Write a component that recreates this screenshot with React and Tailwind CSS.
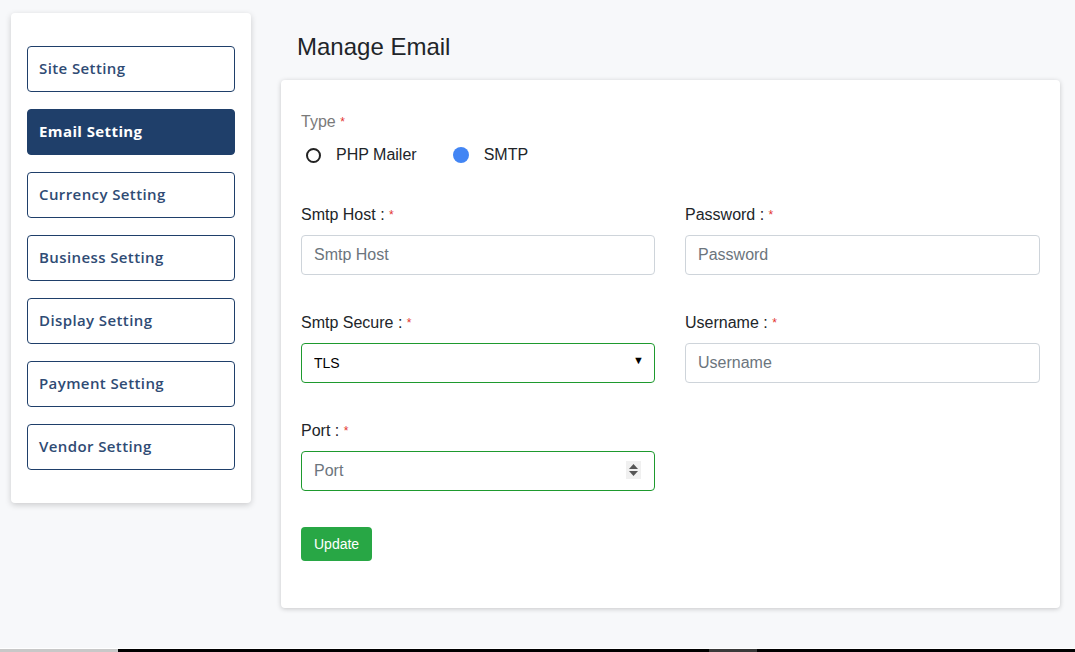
import { useState } from "react";

const menu = [
  "Site Setting",
  "Email Setting",
  "Currency Setting",
  "Business Setting",
  "Display Setting",
  "Payment Setting",
  "Vendor Setting",
];

function Label({ text }) {
  return (
    <label className="mt-px block h-6 leading-6 text-[16px] text-[#212529]">
      {text} <span className="text-[12px] text-[#e3342f] align-top">*</span>
    </label>
  );
}

function TextField({ label, placeholder, type = "text" }) {
  return (
    <div className="flex flex-col gap-[8px]">
      <Label text={label} />
      <input
        type={type}
        placeholder={placeholder}
        className="h-10 w-full rounded-[4px] border border-[#ced4da] bg-white px-3 text-[16px] text-[#495057] placeholder:text-[#6c757d] outline-none"
      />
    </div>
  );
}

export default function App() {
  const [active, setActive] = useState("Email Setting");
  const [mailer, setMailer] = useState("smtp");

  return (
    <div className="min-h-[652px] flex flex-col bg-[#f7f8fa]" style={{ fontFamily: '"Liberation Sans", Arial, sans-serif' }}>
      <div className="flex-1 flex items-start pl-[11px] pt-[13px] gap-[30px]">
        {/* SIDEBAR */}
        <aside className="w-[240px] shrink-0 rounded-[4px] bg-white px-4 py-[33px] shadow-[0_2px_6px_rgba(0,0,0,0.18)]">
          <nav className="flex flex-col gap-[17px]">
            {menu.map((m) => {
              const on = m === active;
              return (
                <button
                  key={m}
                  onClick={() => setActive(m)}
                  className={`h-[46px] rounded-[4px] border px-[11px] pb-px text-left text-[15px] tracking-[0.4px] ${
                    on
                      ? "border-[#1f3f6a] bg-[#1f3f6a] font-bold text-white"
                      : "border-[#1f3f6a] bg-white font-semibold text-[#2f4b74]"
                  }`}
                  style={{ fontFamily: '"Open Sans", "Noto Sans", sans-serif' }}
                >
                  {m}
                </button>
              );
            })}
          </nav>
        </aside>

        {/* MAIN */}
        <main className="w-[779px] shrink-0 pt-[19px]">
          <h1 className="pl-4 text-[24px] leading-[29px] text-[#212529] mb-[19px]">Manage Email</h1>

          <div className="rounded-[4px] bg-white px-5 pt-[30px] pb-[47px] shadow-[0_1px_5px_rgba(0,0,0,0.2)]">
            <div className="h-6 leading-6 text-[16px] text-[#7a7a7a]">
              Type <span className="text-[12px] text-[#e3342f] align-top">*</span>
            </div>
            <div className="mt-[9px] flex h-6 items-center text-[16px] text-[#212529]">
              <button onClick={() => setMailer("php")} className="flex items-center">
                <span className="ml-[5px] flex h-[15px] w-[15px] items-center justify-center rounded-full border-2 border-[#222]">
                  {mailer === "php" && <span className="h-[7px] w-[7px] rounded-full bg-[#222]" />}
                </span>
                <span className="ml-[15px]">PHP Mailer</span>
              </button>
              <button onClick={() => setMailer("smtp")} className="ml-9 flex items-center">
                <span
                  className={`flex h-4 w-4 items-center justify-center rounded-full ${
                    mailer === "smtp" ? "bg-[#4285f4]" : "border-2 border-[#222]"
                  }`}
                />
                <span className="ml-[15px]">SMTP</span>
              </button>
            </div>

            <div className="mt-[35px] grid grid-cols-[354px_355px] gap-x-[30px] gap-y-[35px]">
              <TextField label="Smtp Host :" placeholder="Smtp Host" />
              <TextField label="Password :" placeholder="Password" type="password" />

              <div className="flex flex-col gap-[8px]">
                <Label text="Smtp Secure :" />
                <div className="relative">
                  <select className="h-10 w-full appearance-none rounded-[4px] border border-[#1e9a2e] bg-white px-3 text-[14px] text-black outline-none">
                    <option>TLS</option>
                    <option>SSL</option>
                  </select>
                  <span className="pointer-events-none absolute right-[11px] top-[9px] text-[11px] text-black">▼</span>
                </div>
              </div>
              <TextField label="Username :" placeholder="Username" />

              <div className="flex flex-col gap-[8px]">
                <Label text="Port :" />
                <div className="relative">
                  <input
                    type="text"
                    placeholder="Port"
                    className="h-10 w-full rounded-[4px] border border-[#1e9a2e] bg-white px-3 text-[16px] placeholder:text-[#6c757d] outline-none"
                  />
                  <span className="pointer-events-none absolute right-[14px] top-[10px] flex h-[18px] w-[15px] flex-col items-center justify-center gap-[2px] bg-[#f0f0f0]">
                    <svg width="9" height="5" viewBox="0 0 9 5"><path d="M0 5 L4.5 0 L9 5 Z" fill="#555" /></svg>
                    <svg width="9" height="5" viewBox="0 0 9 5"><path d="M0 0 L4.5 5 L9 0 Z" fill="#555" /></svg>
                  </span>
                </div>
              </div>
            </div>

            <button className="mt-9 h-[34px] rounded-[4px] bg-[#28a745] px-[13px] text-[14px] text-white">
              Update
            </button>
          </div>
        </main>
      </div>

      {/* bottom edge strip */}
      <div className="mt-auto h-px bg-white" />
      <div className="flex h-[3px]">
        <div className="w-[118px] bg-[#c8c8c8]" />
        <div className="w-[591px] bg-black" />
        <div className="w-[48px] bg-[#3a3a3a]" />
        <div className="flex-1 bg-black" />
      </div>
    </div>
  );
}
